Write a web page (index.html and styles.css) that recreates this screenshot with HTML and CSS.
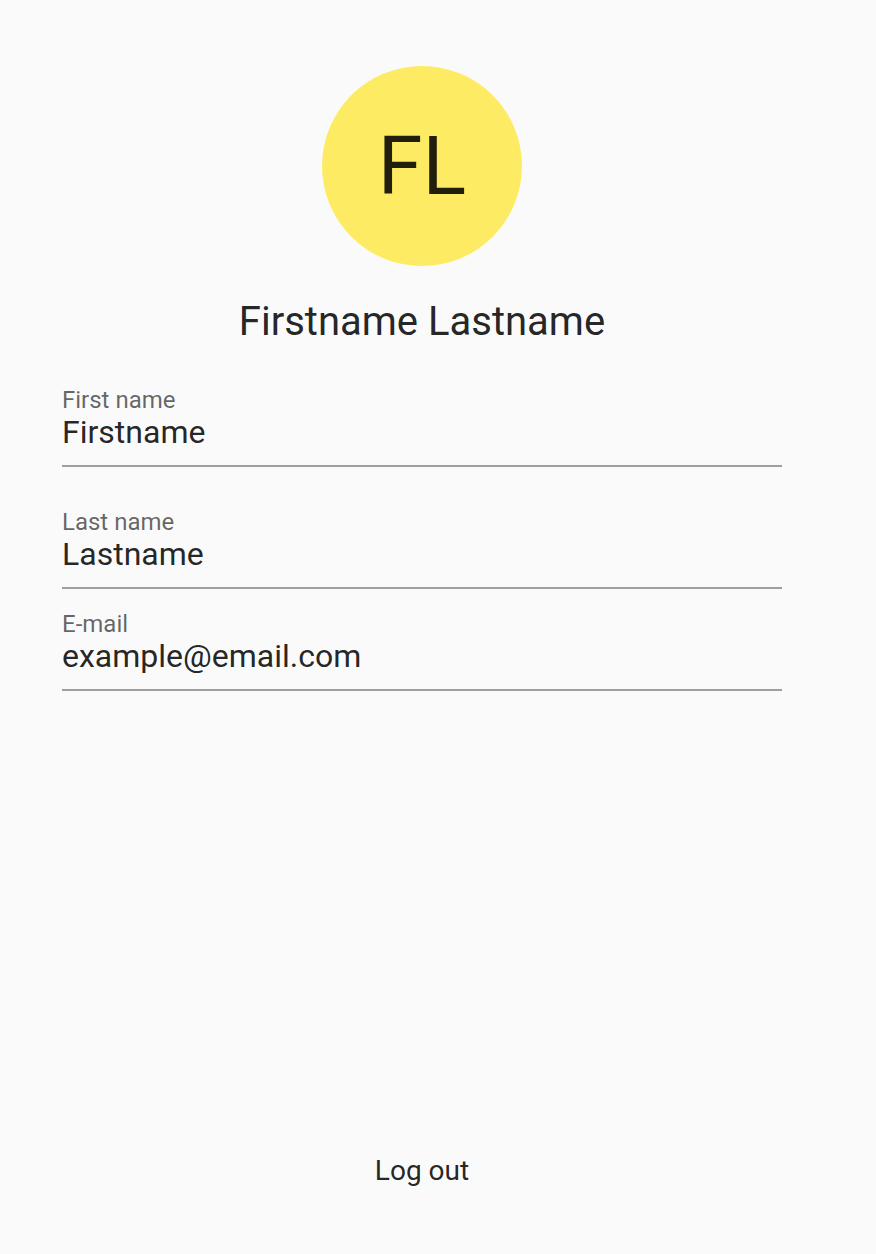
FILE: index.html
```html
<!DOCTYPE html>
<html>
<head>
<meta charset="utf-8">
<link rel="stylesheet" href="styles.css">
</head>
<body>
<div class="page">
  <div class="profile">
    <div class="avatar">FL</div>
    <div class="name">Firstname Lastname</div>
  </div>
  <form class="form">
    <div class="field first">
      <label class="label">First name</label>
      <div class="value">Firstname</div>
    </div>
    <div class="field second">
      <label class="label">Last name</label>
      <div class="value">Lastname</div>
    </div>
    <div class="field">
      <label class="label">E-mail</label>
      <div class="value">example@email.com</div>
    </div>
  </form>
  <div class="spacer"></div>
  <div class="actions">
    <button class="logout" type="button">Log out</button>
  </div>
</div>
</body>
</html>
```
FILE: styles.css
```css
html, body {
  margin: 0;
  padding: 0;
  background: #fafafa;
  font-family: Roboto, "Noto Sans", sans-serif;
  color: rgba(0,0,0,0.87);
}
.page {
  width: 720px;
  margin-left: 62px;
  min-height: 1254px;
  display: flex;
  flex-direction: column;
  box-sizing: border-box;
}
.profile {
  display: flex;
  flex-direction: column;
  align-items: center;
  padding-top: 66px;
}
.avatar {
  width: 200px;
  height: 200px;
  border-radius: 50%;
  background: #fdec63;
  color: #221e0c;
  font-size: 81px;
  display: flex;
  align-items: center;
  justify-content: center;
  line-height: 1;
}
.name {
  margin-top: 32px;
  font-size: 40px;
  line-height: 48px;
}
.form {
  display: flex;
  flex-direction: column;
  margin-top: 40px;
}
.field {
  border-bottom: 2px solid #9e9e9e;
  display: flex;
  flex-direction: column;
  padding-bottom: 15px;
}
.field.first { margin-bottom: 41px; }
.field.second { margin-bottom: 21px; }
.label {
  font-size: 24px;
  line-height: 28px;
  color: rgba(0,0,0,0.6);
}
.value {
  font-size: 32px;
  line-height: 36px;
}
.spacer { flex: 1; }
.actions {
  display: flex;
  justify-content: center;
  padding-bottom: 57px;
}
.logout {
  background: none;
  border: none;
  font-family: Roboto, "Noto Sans", sans-serif;
  font-size: 28px;
  line-height: 36px;
  color: rgba(0,0,0,0.87);
  padding: 8px 16px;
}
```
